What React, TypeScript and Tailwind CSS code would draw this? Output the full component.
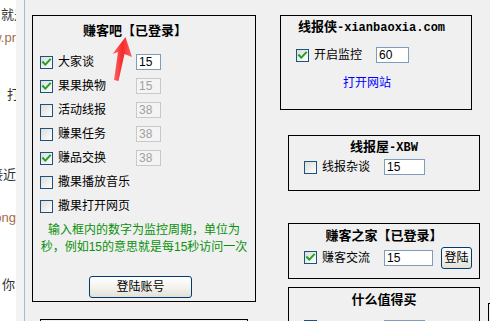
import React from "react";

const FONT = { fontFamily: '"Liberation Sans", "Noto Sans CJK SC", sans-serif' };
const TITLE_FONT = { fontFamily: '"Liberation Mono", "Noto Sans CJK SC", monospace' };

function Check({ checked }: { checked?: boolean }) {
  return (
    <div className="w-[13px] h-[13px] shrink-0 border border-[#1c5180] bg-gradient-to-br from-[#dcdcd7] to-white flex items-center justify-center">
      {checked && (
        <svg width="11" height="11" viewBox="0 0 11 11">
          <path d="M2 5.2 L4.3 7.6 L9 2.6" stroke="#21a121" strokeWidth="2" fill="none" strokeLinecap="square" />
        </svg>
      )}
    </div>
  );
}

function Field({ value, w, disabled }: { value: string; w: string; disabled?: boolean }) {
  return (
    <div
      className={`${w} h-4 shrink-0 border text-[12px] leading-[14px] pl-[2px] ${
        disabled ? "border-[#c9c9c9] bg-[#f4f4f4] text-[#a0a0a0]" : "border-[#7f9db9] bg-white text-black"
      }`}
    >
      {value}
    </div>
  );
}

function Row1({ label, checked, value, disabled }: { label: string; checked?: boolean; value?: string; disabled?: boolean }) {
  return (
    <div className="h-6 flex items-center pl-[7px]">
      <Check checked={checked} />
      <div className="ml-[5px] w-[78px] text-[12px] leading-4 text-black whitespace-nowrap">{label}</div>
      {value !== undefined && <Field value={value} w="w-[25px]" disabled={disabled} />}
    </div>
  );
}

function XpButton({ children, cls }: { children: React.ReactNode; cls: string }) {
  return (
    <div
      className={`${cls} shrink-0 border border-[#003c74] rounded-[3px] bg-gradient-to-b from-white via-[#f4f3ee] to-[#e3e1d6] flex items-center justify-center text-[12px] leading-4 text-black`}
    >
      {children}
    </div>
  );
}

function Frag({ cls, children }: { cls: string; children: React.ReactNode }) {
  return <div className={`${cls} h-4 flex justify-end whitespace-nowrap`}>{children}</div>;
}

export default function App() {
  return (
    <div className="w-[490px] h-[321px] overflow-hidden bg-[#f0f0f0] flex relative" style={FONT}>
      {/* left strip (window behind) */}
      <div className="w-4 shrink-0 h-full bg-white overflow-hidden flex flex-col text-[13px] leading-4 text-[#333]">
        <Frag cls="mt-[7px]">
          <span className="mr-[-11px]">就是</span>
        </Frag>
        <Frag cls="mt-[7px] text-[#a86b44]">www.pr</Frag>
        <Frag cls="mt-[41px]">
          <span className="mr-[-4px]">打</span>
        </Frag>
        <Frag cls="mt-[64px]">连接近</Frag>
        <Frag cls="mt-[27px] text-[#a86b44]">xiaong</Frag>
        <Frag cls="mt-[51px]">
          <span className="mr-[1px]">你</span>
        </Frag>
      </div>
      <div className="w-2 shrink-0 h-full bg-[#f3f3f3]" />
      <div className="w-px shrink-0 h-full bg-[#a5bbd0]" />

      {/* column 1 */}
      <div className="ml-[7px] w-[224px] shrink-0 flex flex-col">
        <div className="mt-[15px] h-[287px] shrink-0 border border-black flex flex-col">
          <div className="pt-[7px] pl-[50px] h-[23px] text-[13px] leading-4 font-bold text-black whitespace-nowrap">
            赚客吧【已登录】
          </div>
          <div className="mt-[11px] flex flex-col">
            <Row1 label="大家谈" checked value="15" />
            <Row1 label="果果换物" checked value="15" disabled />
            <Row1 label="活动线报" value="38" disabled />
            <Row1 label="赚果任务" value="38" disabled />
            <Row1 label="赚品交换" checked value="38" disabled />
            <Row1 label="撒果播放音乐" />
            <Row1 label="撒果打开网页" />
          </div>
          <div className="mt-[4px] text-center text-[12px] leading-[17px] text-[#0a900a] whitespace-nowrap">
            输入框内的数字为监控周期，单位为
            <br />
            秒，例如15的意思就是每15秒访问一次
          </div>
          <XpButton cls="mt-[20px] ml-[56px] w-[103px] h-[22px]">登陆账号</XpButton>
        </div>
        <div className="mt-[17px] ml-[8px] w-[208px] h-10 shrink-0 border border-black" />
      </div>

      {/* column 2 */}
      <div className="ml-[24px] w-[200px] shrink-0 flex flex-col">
        <div className="mt-[15px] w-[192px] h-[95px] shrink-0 border border-black flex flex-col">
          <div className="pt-[3px] pl-[17px] h-[19px] text-[13px] leading-4 font-bold text-black whitespace-nowrap">
            线报侠<span style={TITLE_FONT} className="text-[12px]">-xianbaoxia.com</span>
          </div>
          <div className="mt-3 h-4 flex items-center pl-[15px]">
            <Check checked />
            <div className="ml-[5px] w-[62px] text-[12px] leading-4 text-black">开启监控</div>
            <Field value="60" w="w-[33px]" />
          </div>
          <div className="mt-3 pl-[62px] text-[12px] leading-4 text-[#0000ff]">打开网站</div>
        </div>

        <div className="mt-[25px] ml-[8px] w-[192px] h-[56px] shrink-0 border border-black flex flex-col">
          <div className="pt-[3px] h-[19px] text-center text-[13px] leading-4 font-bold text-black whitespace-nowrap">
            线报屋<span style={TITLE_FONT} className="text-[12px]">-XBW</span>
          </div>
          <div className="mt-[4px] h-4 flex items-center pl-[15px]">
            <Check />
            <div className="ml-[5px] w-[62px] text-[12px] leading-4 text-black">线报杂谈</div>
            <Field value="15" w="w-[41px]" />
          </div>
        </div>

        <div className="mt-[32px] ml-[8px] w-[192px] h-[56px] shrink-0 border border-black flex flex-col">
          <div className="pt-[4px] h-[20px] text-center text-[13px] leading-4 font-bold text-black whitespace-nowrap">
            赚客之家【已登录】
          </div>
          <div className="mt-[3px] h-[21px] flex items-center pl-[15px]">
            <Check checked />
            <div className="ml-[5px] w-[62px] text-[12px] leading-4 text-black">赚客交流</div>
            <Field value="15" w="w-[49px]" />
            <XpButton cls="ml-[8px] w-[31px] h-[22px]">登陆</XpButton>
          </div>
        </div>

        <div className="mt-[8px] ml-[8px] w-[192px] h-[60px] shrink-0 border border-black flex flex-col">
          <div className="pt-[4px] h-[20px] text-center text-[13px] leading-4 font-bold text-black whitespace-nowrap">
            什么值得买
          </div>
          <div className="mt-[12px] h-4 flex items-start pl-[15px]">
            <Check />
            <div className="ml-[5px] w-[62px]" />
            <Field value="" w="w-[41px]" />
          </div>
        </div>
      </div>

      {/* right edge box */}
      <div className="ml-[8px] mt-[303px] w-10 h-10 shrink-0 border border-black" />

      {/* red arrow annotation */}
      <svg className="absolute left-0 top-0 pointer-events-none" width="490" height="321">
        <defs>
          <linearGradient id="arr" x1="0" y1="0" x2="1" y2="0">
            <stop offset="0" stopColor="#ff7070" />
            <stop offset="0.5" stopColor="#f52a2a" />
            <stop offset="1" stopColor="#ff6060" />
          </linearGradient>
        </defs>
        <polygon
          points="125.5,37 132,57 124.5,54 118.5,81 114,80 118,52 112.5,54"
          fill="url(#arr)"
        />
      </svg>
    </div>
  );
}
